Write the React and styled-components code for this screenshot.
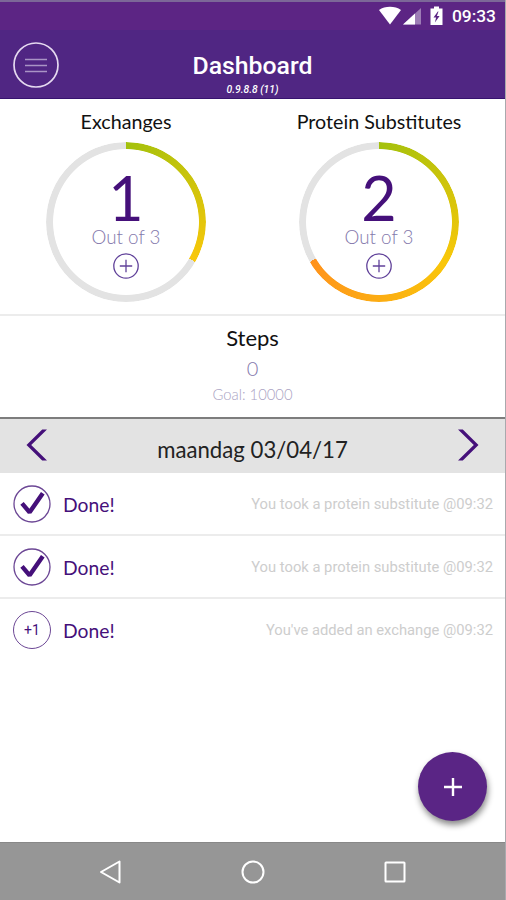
import React from 'react'
import styled, { createGlobalStyle } from 'styled-components'

const color = {
  brand: '#502683',
  status: '#5c2584',
  ink: '#45107a',
  muted: '#8479ac',
  track: '#e3e3e3',
  line: '#ececec',
}

const GlobalStyle = createGlobalStyle`
  * {
    box-sizing: border-box;
  }

  body {
    background: #fff;
    margin: 0;
  }

  button {
    background: none;
    border: 0;
    padding: 0;
  }

  svg {
    display: block;
  }
`

const Screen = styled.div`
  border-right: 1px solid #a9a9ad;
  display: flex;
  flex-direction: column;
  font-family: Lato, sans-serif;
  height: 900px;
  overflow: hidden;
  width: 506px;
`

const StatusBar = styled.div`
  align-items: center;
  background: ${color.status};
  border-top: 2px solid #7c6798;
  color: #fff;
  display: flex;
  flex: none;
  font: 500 17.4px/28px Roboto, sans-serif;
  height: 30px;
  justify-content: flex-end;
  padding-right: 9px;
`

const StatusTime = styled.span`
  margin-left: 7px;
`

const Header = styled.header`
  align-items: center;
  background: ${color.brand};
  border-bottom: 1px solid #37136f;
  color: #fff;
  display: grid;
  flex: none;
  grid-template-columns: 72px 1fr 72px;
  height: 69px;
`

const MenuButton = styled.button`
  height: 46px;
  margin-left: 13px;
  margin-top: 1px;
  width: 46px;
`

const Heading = styled.div`
  font-family: Roboto, sans-serif;
  padding-top: 19px;
  text-align: center;
`

const Title = styled.h1`
  font-size: 24.8px;
  font-weight: 500;
  line-height: 28px;
  margin: 0;
`

const Version = styled.div`
  font-size: 10.3px;
  font-style: italic;
  font-weight: 500;
  line-height: 12px;
  margin-top: 4px;
`

const Goals = styled.section`
  border-bottom: 2px solid ${color.line};
  display: grid;
  flex: none;
  grid-template-columns: 253px 253px;
  height: 217px;
`

const Goal = styled.div`
  align-items: center;
  display: flex;
  flex-direction: column;
  padding-right: 1px;
  padding-top: 10px;
`

const Label = styled.h2`
  color: #111;
  font-size: ${p => p.$size || 19.7}px;
  font-weight: 400;
  line-height: 26px;
  margin: 0;
`

const Ring = styled.div`
  display: grid;
  height: 160px;
  margin-top: 6.5px;
  width: 160px;

  > * {
    grid-area: 1 / 1;
  }
`

const RingTrack = styled.div`
  background: conic-gradient(${p => p.$stops});
  border-radius: 50%;
  mask: radial-gradient(closest-side, #0000 72.5px, #000 73.3px);
`

const RingContent = styled.div`
  align-items: center;
  display: flex;
  flex-direction: column;
  padding-top: 29px;
`

const Count = styled.div`
  color: ${color.ink};
  font-size: 61px;
  line-height: 54px;
`

const OutOf = styled.div`
  color: ${color.muted};
  font-size: 18.8px;
  font-weight: 300;
  line-height: 24px;
`

const AddButton = styled.button`
  height: 26px;
  margin-top: 4.5px;
  width: 26px;
`

const Steps = styled.section`
  align-items: center;
  border-bottom: 2px solid #7d7d7d;
  display: flex;
  flex: none;
  flex-direction: column;
  height: 103px;
  padding-top: 9px;
`

const StepCount = styled.div`
  color: ${color.muted};
  font-size: 20px;
  font-weight: 300;
  line-height: 24px;
  margin-top: 5px;
`

const StepGoal = styled.div`
  color: #aaa3c3;
  font-size: 14.8px;
  font-weight: 300;
  line-height: 18px;
  margin-top: 5px;
`

const DateBar = styled.nav`
  align-items: center;
  background: ${color.track};
  display: flex;
  flex: none;
  height: 54px;
  justify-content: space-between;
  padding: 0 26px;
`

const ArrowButton = styled.button`
  height: 34px;
  margin-top: -2px;
  width: 21px;
`

const CurrentDate = styled.div`
  color: #222;
  font-size: 22.2px;
  line-height: 28px;
  padding-top: 7px;
`

const Log = styled.ul`
  flex: 1;
  list-style: none;
  margin: 0;
  padding: 0;
`

const LogRow = styled.li`
  align-items: center;
  display: flex;
  height: 61px;
  padding: 0 12px 0 13px;

  & + & {
    border-top: 2px solid ${color.line};
    height: 63px;
  }
`

const RowIcon = styled.div`
  height: 38px;
  width: 38px;
`

const PlusOne = styled.div`
  border: 1px solid #6c4795;
  border-radius: 50%;
  color: ${color.ink};
  font: 400 14px/37px Roboto, sans-serif;
  height: 38px;
  text-align: center;
  width: 38px;
`

const Done = styled.div`
  color: ${color.ink};
  font-size: 19.3px;
  line-height: 26px;
  margin-left: 12px;
  padding-top: 2px;
`

const Message = styled.div`
  color: #cdcdcd;
  font: 400 14.76px/20px Roboto, sans-serif;
  margin-left: auto;
  padding-top: 1px;
  white-space: nowrap;
`

const Fab = styled.button`
  align-items: center;
  align-self: flex-end;
  background: #5a2585;
  border-radius: 50%;
  box-shadow: 1px 4px 6px #0007;
  display: flex;
  flex: none;
  height: 69px;
  justify-content: center;
  margin: 0 18px 21px 0;
  width: 69px;
`

const SystemBar = styled.footer`
  align-items: center;
  background: #969696;
  border-top: 1px solid #888;
  display: flex;
  flex: none;
  height: 58px;
  justify-content: space-between;
  padding: 0 98px 0 99px;
`

const goals = [
  { label: 'Exchanges', count: 1, total: 3 },
  { label: 'Protein Substitutes', count: 2, total: 3 },
]

const log = [
  { id: 1, type: 'protein', text: 'You took a protein substitute @09:32' },
  { id: 2, type: 'protein', text: 'You took a protein substitute @09:32' },
  { id: 3, type: 'exchange', text: "You've added an exchange @09:32" },
]

const ringColors = ['#a3c10c', '#f9c70a', '#ff921c', '#ff921c']

const ringStops = (count, total) => {
  const step = 360 / total
  const filled = ringColors
    .slice(0, count + 1)
    .map((stop, i) => `${stop} ${i * step}deg`)

  return [...filled, `${color.track} ${count * step}deg`].join(', ')
}

const StatusIcons = () => (
  <svg fill="#fff" height="22" viewBox="0 0 66 22" width="66">
    <path d="M0 5C6 .8 16 .8 22 5L11 19.500Z" />
    <path d="M42 3v16.500H24Z" opacity=".4" />
    <path d="M36 8.500V19.500H24Z" />
    <path
      d="M55 1.500h5v2h3.500v16.500H51.500V3.500H55ZM58.800 6.500l-4.300 6h2.600l-1.200 5 4.700-6.600h-2.700l1.600-4.400Z"
      fillRule="evenodd"
    />
  </svg>
)

const MenuIcon = () => (
  <svg fill="none" height="46" viewBox="0 0 46 46" width="46">
    <circle cx="23" cy="23" r="22" stroke="#e5d9f0" strokeWidth="1.700" />
    <path d="M12 17.500h22M12 23.500h22M12 29.500h22" stroke="#a994c5" strokeWidth="1.700" />
  </svg>
)

const AddIcon = () => (
  <svg fill="none" height="26" stroke="#61429a" viewBox="0 0 26 26" width="26">
    <circle cx="13" cy="13" r="12.200" strokeWidth="1.300" />
    <path d="M13 6.800v12.400M6.800 13h12.400" strokeWidth="1.300" />
  </svg>
)

const CheckIcon = () => (
  <svg fill="none" height="38" stroke={color.ink} viewBox="0 0 38 38" width="38">
    <circle cx="19" cy="19" r="18" stroke="#6c4795" strokeWidth="1.300" />
    <path d="M9 18.300l7.600 9L29.800 8.200" strokeLinejoin="bevel" strokeWidth="4.400" />
  </svg>
)

const Arrow = ({ d }) => (
  <svg fill={color.ink} height="34" viewBox="0 0 21 34" width="21">
    <path d={d} />
  </svg>
)

const GoalRing = ({ count, total }) => (
  <Ring>
    <RingTrack $stops={ringStops(count, total)} />
    <RingContent>
      <Count>{count}</Count>
      <OutOf>Out of {total}</OutOf>
      <AddButton type="button">
        <AddIcon />
      </AddButton>
    </RingContent>
  </Ring>
)

function App() {
  return (
    <>
      <GlobalStyle />
      <Screen>
        <StatusBar>
          <StatusIcons />
          <StatusTime>09:33</StatusTime>
        </StatusBar>
        <Header>
          <MenuButton type="button">
            <MenuIcon />
          </MenuButton>
          <Heading>
            <Title>Dashboard</Title>
            <Version>0.9.8.8 (11)</Version>
          </Heading>
        </Header>
        <Goals>
          {goals.map(goal => (
            <Goal key={goal.label}>
              <Label>{goal.label}</Label>
              <GoalRing count={goal.count} total={goal.total} />
            </Goal>
          ))}
        </Goals>
        <Steps>
          <Label $size={22}>Steps</Label>
          <StepCount>0</StepCount>
          <StepGoal>Goal: 10000</StepGoal>
        </Steps>
        <DateBar>
          <ArrowButton type="button">
            <Arrow d="M16.200 1.500h4.800L5.200 17 21 32.500h-4.800L.5 17Z" />
          </ArrowButton>
          <CurrentDate>maandag 03/04/17</CurrentDate>
          <ArrowButton type="button">
            <Arrow d="M4.800 1.500H0L15.800 17 0 32.500h4.800L20.500 17Z" />
          </ArrowButton>
        </DateBar>
        <Log>
          {log.map(entry => (
            <LogRow key={entry.id}>
              <RowIcon>
                {entry.type === 'protein' ? <CheckIcon /> : <PlusOne>+1</PlusOne>}
              </RowIcon>
              <Done>Done!</Done>
              <Message>{entry.text}</Message>
            </LogRow>
          ))}
        </Log>
        <Fab type="button">
          <svg height="20" stroke="#fff" strokeWidth="2.400" viewBox="0 0 20 20" width="20">
            <path d="M10 1v18M1 10h18" />
          </svg>
        </Fab>
        <SystemBar>
          <svg fill="none" height="24" stroke="#fff" strokeWidth="2" viewBox="0 0 24 24" width="24">
            <path d="M2 12L20.500 1.500v21Z" strokeLinejoin="round" />
          </svg>
          <svg fill="none" height="24" stroke="#fff" strokeWidth="2" viewBox="0 0 24 24" width="24">
            <circle cx="12" cy="12" r="10.500" />
          </svg>
          <svg fill="none" height="24" stroke="#fff" strokeWidth="2" viewBox="0 0 24 24" width="24">
            <rect height="19" rx=".5" width="19" x="2.500" y="2.500" />
          </svg>
        </SystemBar>
      </Screen>
    </>
  )
}

export default App
